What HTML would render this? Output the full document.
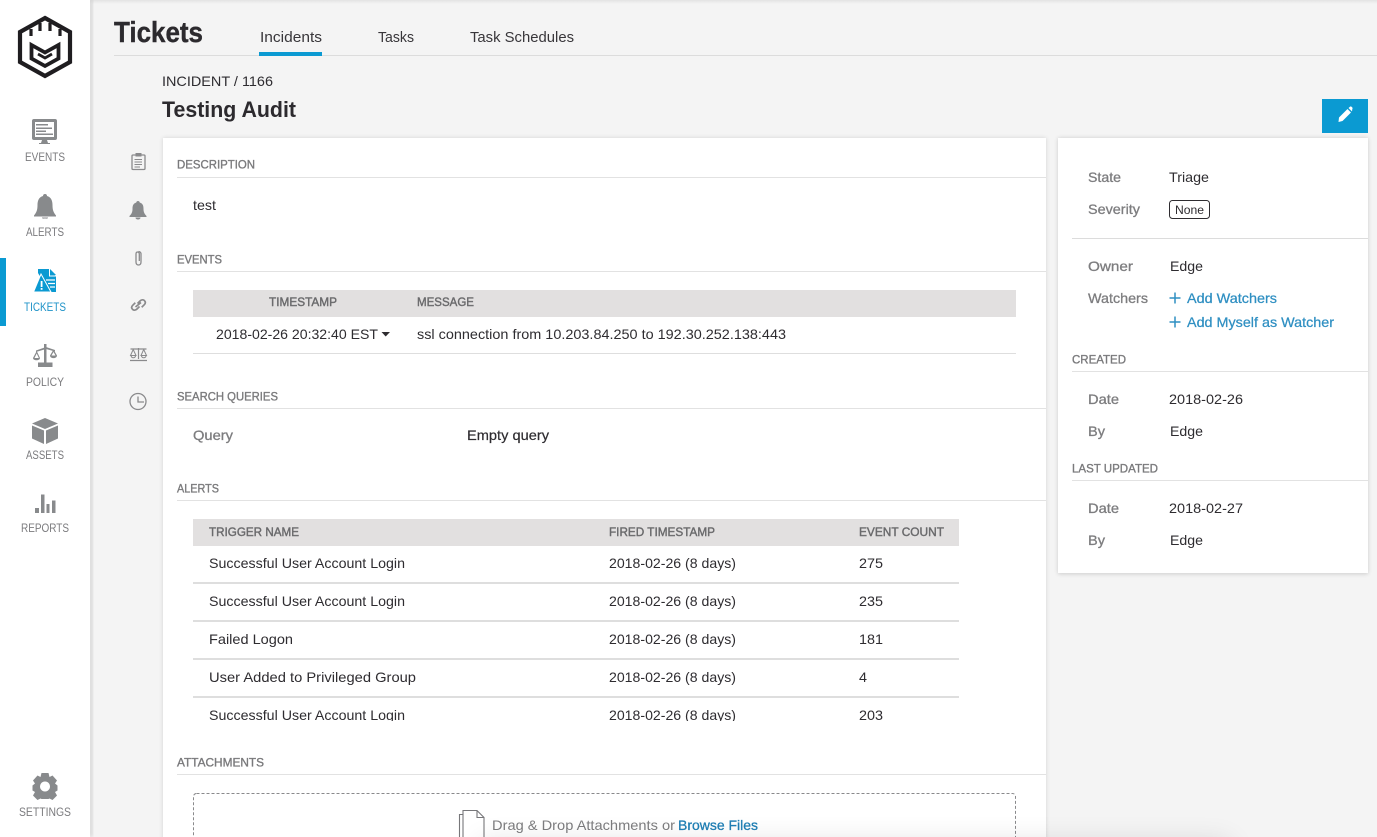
<!DOCTYPE html>
<html lang="en">
<head>
<meta charset="utf-8">
<title>Tickets - Incident 1166</title>
<style>
html,body{margin:0;padding:0;width:1377px;height:837px;overflow:hidden;background:#f4f4f4}
svg{display:block}
text{font-family:"Liberation Sans",sans-serif;white-space:pre}
.nav{font-size:11.5px;fill:#7b7b7e}
.h{font-size:12px;fill:#7a7a7c;font-weight:400;stroke:#7a7a7c;stroke-width:.35;transform:translateY(-.6px)}
.th{font-size:12px;fill:#6a6a6c;stroke:#6a6a6c;stroke-width:.4}
.td{font-size:14px;fill:#2e2c30}
.lb{font-size:14px;fill:#7d7d7f;stroke:#7d7d7f;stroke-width:.3}
.lk{font-size:14px;fill:#2f8fc2;stroke:#2f8fc2;stroke-width:.25}
.tab{font-size:15px;fill:#38363a}
.ic{fill:#888a8c}
.ol{fill:none;stroke:#8a8a8c;stroke-width:1.3}
</style>
</head>
<body>
<svg xmlns="http://www.w3.org/2000/svg" width="1377" height="837" viewBox="0 0 1377 837">
<defs>
<filter id="s" x="-5%" y="-5%" width="110%" height="110%"><feGaussianBlur stdDeviation="2"/></filter>
<filter id="b" x="-10%" y="-200%" width="120%" height="500%"><feGaussianBlur stdDeviation="14"/></filter>
<linearGradient id="top" x1="0" y1="0" x2="0" y2="1"><stop offset="0" stop-color="#000" stop-opacity=".07"/><stop offset="1" stop-color="#000" stop-opacity="0"/></linearGradient>
</defs>

<!-- page -->
<rect width="1377" height="837" fill="#f4f4f4"/>
<rect width="1377" height="4" fill="url(#top)"/>

<!-- sidebar -->
<rect x="88" y="0" width="5" height="837" fill="#000" opacity=".11" filter="url(#s)"/>
<rect x="0" y="0" width="90" height="837" fill="#fff"/>
<rect x="0" y="258" width="6" height="68" fill="#0b9ad2"/>

<!-- logo -->
<path d="M45 18 L70 32 L70 62 L45 76 L20 62 L20 32 Z" fill="none" stroke="#1f1d20" stroke-width="4.2"/>
<path d="M31 29V36M40 23V31M50 23V31M60 29V36" stroke="#1f1d20" stroke-width="3.200" fill="none"/>
<path d="M31.500 45 L45 52.500 L58.500 45 L58.500 58.500 L45 66 L31.500 58.500 Z" fill="none" stroke="#1f1d20" stroke-width="3.800"/>
<path d="M38 54 L45 58 L52 54" fill="none" stroke="#1f1d20" stroke-width="2.800"/>

<!-- nav: events -->
<path d="M34 119H55a2 2 0 0 1 2 2V138a2 2 0 0 1-2 2H34a2 2 0 0 1-2-2V121a2 2 0 0 1 2-2Z" class="ic"/>
<rect x="35" y="122" width="19" height="15" fill="#fff"/>
<path d="M36 124H48V125.500H36ZM36 127.500H52V129H36ZM36 130.500H46V132H36ZM36 133.500H53V135H36Z" class="ic"/>
<path d="M42 140H47L48 143H50V144H39V143H41Z" class="ic"/>
<text x="25" y="161" class="nav" textLength="40" lengthAdjust="spacingAndGlyphs">EVENTS</text>

<!-- nav: alerts -->
<path d="M45 194C46.500 194 47 195 47 196C51 197 52.500 200.500 52.500 205C52.500 210 53.500 212.500 56 215.500V216.500H34V215.500C36.500 212.500 37.500 210 37.500 205C37.500 200.500 39 197 43 196C43 195 43.500 194 45 194Z" class="ic"/>
<path d="M42 217.500H48C48 219 46.500 218.500 45 218.500C43.500 218.500 42 219 42 217.500Z" class="ic"/>
<text x="26" y="236" class="nav" textLength="38" lengthAdjust="spacingAndGlyphs">ALERTS</text>

<!-- nav: tickets -->
<path d="M38 269H49L56 276V292H34L41.500 279L38 273Z" fill="#0b9ad2"/>
<path d="M50 269L56 275H50Z" fill="#0b9ad2"/>
<path d="M49.500 268.500V276H56.500" fill="none" stroke="#fff" stroke-width="1"/>
<path d="M41 274L51 292H33.500Z" fill="#0b9ad2" stroke="#fff" stroke-width="1"/>
<rect x="40.700" y="281" width="1.800" height="6" fill="#fff"/>
<rect x="40.700" y="288" width="1.800" height="1.800" fill="#fff"/>
<path d="M46 280H55M48 283.500H55M50 287H55" stroke="#fff" stroke-width="1.200"/>
<text x="24" y="311" class="nav" style="fill:#1f93c8" textLength="42" lengthAdjust="spacingAndGlyphs">TICKETS</text>

<!-- nav: policy -->
<path d="M44 344H46.500V363H44ZM38 362.500H52.500V367H38Z" class="ic"/>
<path d="M36 350.500L46 347L55 350L55 351.500L46 349L36 352Z" class="ic"/>
<path d="M33 358C33 361 40 361 40 358L36.700 351L33 358ZM34.500 358L36.700 353.500L38.800 358Z" class="ic"/>
<path d="M50 355.500C50 359 57 359 57 355.500L53.500 349.500ZM51.500 355.500L53.500 352L55.500 355.500Z" class="ic"/>
<text x="26" y="386" class="nav" textLength="38" lengthAdjust="spacingAndGlyphs">POLICY</text>

<!-- nav: assets -->
<path d="M45 418L58 423.500L45 429L32 423.500Z" class="ic"/>
<path d="M32 425.500L44 430.500V444L32 438.500Z" class="ic"/>
<path d="M58 425.500L46 430.500V444L58 438.500Z" class="ic"/>
<text x="26" y="459" class="nav" textLength="38" lengthAdjust="spacingAndGlyphs">ASSETS</text>

<!-- nav: reports -->
<path d="M35 508H39V513H35ZM41 494.500H44.500V513H41ZM46.500 504H49.500V513H46.500ZM52 500.500H55.500V513H52Z" class="ic"/>
<text x="21" y="532" class="nav" textLength="48" lengthAdjust="spacingAndGlyphs">REPORTS</text>

<!-- nav: settings -->
<path fill-rule="evenodd" class="ic" d="M41.500 773H48.500L49.500 777L52.500 775.500L57 780.500L55 783.500L57.500 785.500V790.500L55 792L57 795.500L52.500 800L49.500 798.500L48.500 799H41.500L40.500 798.500L37.500 800L33 795.500L35 792L32.500 790.500V785.500L35 783.500L33 780.500L37.500 775.500L40.500 777ZM45 781.500a5 5 0 1 0 .01 0Z"/>
<text x="19" y="816" class="nav" textLength="52" lengthAdjust="spacingAndGlyphs">SETTINGS</text>

<!-- header -->
<text x="114" y="42" font-size="29" font-weight="700" fill="#2c2a2e" stroke="#2c2a2e" stroke-width=".4" textLength="89" lengthAdjust="spacingAndGlyphs">Tickets</text>
<rect x="114" y="55" width="1263" height="1" fill="#dcdcdc"/>
<text x="260" y="42" class="tab" textLength="62" lengthAdjust="spacingAndGlyphs">Incidents</text>
<rect x="259" y="52" width="63" height="4" fill="#0b9ad2"/>
<text x="378" y="42" class="tab" textLength="36" lengthAdjust="spacingAndGlyphs">Tasks</text>
<text x="470" y="42" class="tab" textLength="104" lengthAdjust="spacingAndGlyphs">Task Schedules</text>

<text x="162" y="86" font-size="14" fill="#2e2c30" textLength="111" lengthAdjust="spacingAndGlyphs">INCIDENT / 1166</text>
<text x="162" y="117" font-size="22" font-weight="700" fill="#2c2a2e" textLength="134" lengthAdjust="spacingAndGlyphs">Testing Audit</text>

<!-- edit button -->
<rect x="1322" y="99" width="46" height="34" fill="#0b9ad2"/>
<path d="M1339 117.500L1347.500 109L1351 112.500L1342.500 121L1338.500 122Z M1348.500 108L1350 106.700C1350.500 106.300 1351 106.300 1351.500 106.700L1352.300 107.500C1352.700 108 1352.700 108.500 1352.300 109L1352 111.500Z" fill="#fff"/>

<!-- side tab icons -->
<g class="ol">
<rect x="132" y="155" width="13" height="14.500" rx="1" fill="none"/>
<rect x="135.500" y="153" width="6" height="3.500" fill="#8a8a8c" stroke="none"/>
<path d="M134.500 159.500H142M134.500 162H142M134.500 164.500H142M134.500 167H140" stroke-width="1"/>
<path d="M138.500 251.500C140 251.500 141 252.500 141 254V262C141 264 140 265 138.500 265C137 265 136 264 136 262V254C136 252.800 136.700 252 137.700 252C138.800 252 139.300 252.800 139.300 254V261"/>
<path d="M137.500 303.500L140 301C141.500 299.500 143.500 299.500 144.500 300.700C145.700 302 145.500 303.500 144.300 304.700L141.700 307.200M139.500 306.500L137 309C135.500 310.500 133.500 310.500 132.500 309.300C131.300 308 131.500 306.500 132.700 305.300L135.300 302.800M135.500 307L141 302.500" stroke-width="1.700"/>
<path d="M138.500 348V359M130.500 349H146.500M130 360.500H147" stroke-width="1.200"/>
<path d="M130.500 355.500H136L133.200 349.500ZM141 355.500H146.500L143.700 349.500Z" stroke-width="1"/>
<path d="M131 355.500C131.500 358.500 135 358.500 135.700 355.500M141.300 355.500C142 358.500 145.500 358.500 146.200 355.500" stroke-width="1"/>
<circle cx="138" cy="401.500" r="8"/>
<path d="M138 396.500V402H144"/>
</g>
<path d="M138 201C139 201 139.700 201.700 139.700 202.500C143 203.500 143.500 206 143.500 209C143.500 212 144.500 214 146.500 216V217H129.500V216C131.500 214 132.500 212 132.500 209C132.500 206 133 203.500 136.300 202.500C136.300 201.700 137 201 138 201Z" class="ic"/>
<path d="M135.500 217.500H140.500C140.500 219 139 219.500 138 219.500C137 219.500 135.500 219 135.500 217.500Z" class="ic"/>

<!-- main card -->
<rect x="163" y="138" width="883" height="720" fill="#000" opacity=".14" filter="url(#s)"/>
<rect x="163" y="138" width="883" height="699" fill="#fff"/>

<text x="177" y="169" class="h" textLength="78" lengthAdjust="spacingAndGlyphs">DESCRIPTION</text>
<rect x="177" y="177" width="869" height="1" fill="#e2e2e2"/>
<text x="193" y="210" class="td" textLength="23" lengthAdjust="spacingAndGlyphs">test</text>

<text x="177" y="264" class="h" textLength="45" lengthAdjust="spacingAndGlyphs">EVENTS</text>
<rect x="177" y="271" width="869" height="1" fill="#e2e2e2"/>
<rect x="193" y="290" width="823" height="27" fill="#e2e0e0"/>
<text x="269" y="306" class="th" textLength="68" lengthAdjust="spacingAndGlyphs">TIMESTAMP</text>
<text x="417" y="306" class="th" textLength="57" lengthAdjust="spacingAndGlyphs">MESSAGE</text>
<text x="216" y="339" class="td" textLength="162" lengthAdjust="spacingAndGlyphs">2018-02-26 20:32:40 EST</text>
<path d="M381.500 332H390L385.700 336.500Z" fill="#2e2c30"/>
<text x="417" y="339" class="td" textLength="369" lengthAdjust="spacingAndGlyphs">ssl connection from 10.203.84.250 to 192.30.252.138:443</text>
<rect x="193" y="353" width="823" height="1" fill="#dedede"/>

<text x="177" y="401" class="h" textLength="101" lengthAdjust="spacingAndGlyphs">SEARCH QUERIES</text>
<rect x="177" y="408" width="869" height="1" fill="#e2e2e2"/>
<text x="193" y="440" class="lb" textLength="40" lengthAdjust="spacingAndGlyphs">Query</text>
<text x="467" y="440" class="td" style="stroke:#2e2c30;stroke-width:.2" textLength="82" lengthAdjust="spacingAndGlyphs">Empty query</text>

<text x="177" y="493" class="h" textLength="42" lengthAdjust="spacingAndGlyphs">ALERTS</text>
<rect x="177" y="500" width="869" height="1" fill="#e2e2e2"/>
<rect x="193" y="519" width="766" height="27" fill="#e2e0e0"/>
<text x="209" y="536" class="th" textLength="90" lengthAdjust="spacingAndGlyphs">TRIGGER NAME</text>
<text x="609" y="536" class="th" textLength="106" lengthAdjust="spacingAndGlyphs">FIRED TIMESTAMP</text>
<text x="859" y="536" class="th" textLength="85" lengthAdjust="spacingAndGlyphs">EVENT COUNT</text>

<text x="209" y="568" class="td" textLength="196" lengthAdjust="spacingAndGlyphs">Successful User Account Login</text>
<text x="609" y="568" class="td" textLength="127" lengthAdjust="spacingAndGlyphs">2018-02-26 (8 days)</text>
<text x="859" y="568" class="td" textLength="24" lengthAdjust="spacingAndGlyphs">275</text>
<rect x="193" y="582" width="766" height="2" fill="#dedede"/>

<text x="209" y="606" class="td" textLength="196" lengthAdjust="spacingAndGlyphs">Successful User Account Login</text>
<text x="609" y="606" class="td" textLength="127" lengthAdjust="spacingAndGlyphs">2018-02-26 (8 days)</text>
<text x="859" y="606" class="td" textLength="24" lengthAdjust="spacingAndGlyphs">235</text>
<rect x="193" y="620" width="766" height="2" fill="#dedede"/>

<text x="209" y="644" class="td" textLength="84" lengthAdjust="spacingAndGlyphs">Failed Logon</text>
<text x="609" y="644" class="td" textLength="127" lengthAdjust="spacingAndGlyphs">2018-02-26 (8 days)</text>
<text x="859" y="644" class="td" textLength="24" lengthAdjust="spacingAndGlyphs">181</text>
<rect x="193" y="658" width="766" height="2" fill="#dedede"/>

<text x="209" y="682" class="td" textLength="207" lengthAdjust="spacingAndGlyphs">User Added to Privileged Group</text>
<text x="609" y="682" class="td" textLength="127" lengthAdjust="spacingAndGlyphs">2018-02-26 (8 days)</text>
<text x="859" y="682" class="td" textLength="8" lengthAdjust="spacingAndGlyphs">4</text>
<rect x="193" y="696" width="766" height="2" fill="#dedede"/>

<text x="209" y="720" class="td" textLength="196" lengthAdjust="spacingAndGlyphs">Successful User Account Login</text>
<text x="609" y="720" class="td" textLength="127" lengthAdjust="spacingAndGlyphs">2018-02-26 (8 days)</text>
<text x="859" y="720" class="td" textLength="24" lengthAdjust="spacingAndGlyphs">203</text>
<rect x="190" y="721" width="780" height="14" fill="#fff"/>

<text x="177" y="767" class="h" textLength="87" lengthAdjust="spacingAndGlyphs">ATTACHMENTS</text>
<rect x="177" y="774" width="869" height="1" fill="#e2e2e2"/>
<rect x="193.500" y="793.500" width="822" height="60" rx="3" fill="none" stroke="#8a8a8c" stroke-width="1" stroke-dasharray="3 2"/>
<path d="M463 810.500H477L484 817.500V840H463ZM477 810.500V817.500H484M463 814.500H459.500V840" fill="none" stroke="#77777a" stroke-width="1.100"/>
<text x="492" y="830" font-size="14" fill="#7d7d7f" textLength="183" lengthAdjust="spacingAndGlyphs">Drag &amp; Drop Attachments or</text>
<text x="678" y="830" font-size="14" fill="#1f7fb5" stroke="#1f7fb5" stroke-width=".3" textLength="80" lengthAdjust="spacingAndGlyphs">Browse Files</text>

<!-- right card -->
<rect x="1058" y="138" width="310" height="436" fill="#000" opacity=".16" filter="url(#s)"/>
<rect x="1058" y="138" width="310" height="435" fill="#fff"/>
<text x="1088" y="182" class="lb" textLength="33" lengthAdjust="spacingAndGlyphs">State</text>
<text x="1169" y="182" class="td" textLength="40" lengthAdjust="spacingAndGlyphs">Triage</text>
<text x="1088" y="214" class="lb" textLength="52" lengthAdjust="spacingAndGlyphs">Severity</text>
<rect x="1169.500" y="200.500" width="40" height="18" rx="3" fill="#fff" stroke="#2e2c30" stroke-width="1"/>
<text x="1175" y="214" font-size="12" fill="#2e2c30" textLength="29" lengthAdjust="spacingAndGlyphs">None</text>
<rect x="1072" y="238" width="296" height="1" fill="#dcdcdc"/>
<text x="1088" y="271" class="lb" textLength="45" lengthAdjust="spacingAndGlyphs">Owner</text>
<text x="1170" y="271" class="td" textLength="33" lengthAdjust="spacingAndGlyphs">Edge</text>
<text x="1088" y="303" class="lb" textLength="60" lengthAdjust="spacingAndGlyphs">Watchers</text>
<path d="M1169.500 298H1180.500M1175 292.500V303.500M1169.500 322H1180.500M1175 316.500V327.500" stroke="#2f8fc2" stroke-width="1.500" fill="none"/>
<text x="1187" y="303" class="lk" textLength="90" lengthAdjust="spacingAndGlyphs">Add Watchers</text>
<text x="1187" y="327" class="lk" textLength="147" lengthAdjust="spacingAndGlyphs">Add Myself as Watcher</text>
<text x="1072" y="364" class="h" textLength="54" lengthAdjust="spacingAndGlyphs">CREATED</text>
<rect x="1072" y="371" width="296" height="1" fill="#e2e2e2"/>
<text x="1088" y="404" class="lb" textLength="31" lengthAdjust="spacingAndGlyphs">Date</text>
<text x="1169" y="404" class="td" textLength="74" lengthAdjust="spacingAndGlyphs">2018-02-26</text>
<text x="1088" y="436" class="lb" textLength="17" lengthAdjust="spacingAndGlyphs">By</text>
<text x="1170" y="436" class="td" textLength="33" lengthAdjust="spacingAndGlyphs">Edge</text>
<text x="1072" y="473" class="h" textLength="86" lengthAdjust="spacingAndGlyphs">LAST UPDATED</text>
<rect x="1072" y="480" width="296" height="1" fill="#e2e2e2"/>
<text x="1088" y="513" class="lb" textLength="31" lengthAdjust="spacingAndGlyphs">Date</text>
<text x="1169" y="513" class="td" textLength="74" lengthAdjust="spacingAndGlyphs">2018-02-27</text>
<text x="1088" y="545" class="lb" textLength="17" lengthAdjust="spacingAndGlyphs">By</text>
<text x="1170" y="545" class="td" textLength="33" lengthAdjust="spacingAndGlyphs">Edge</text>

<!-- bottom window shadow -->
<rect x="480" y="842" width="750" height="30" fill="#000" opacity=".12" filter="url(#b)"/>
</svg>
</body>
</html>
